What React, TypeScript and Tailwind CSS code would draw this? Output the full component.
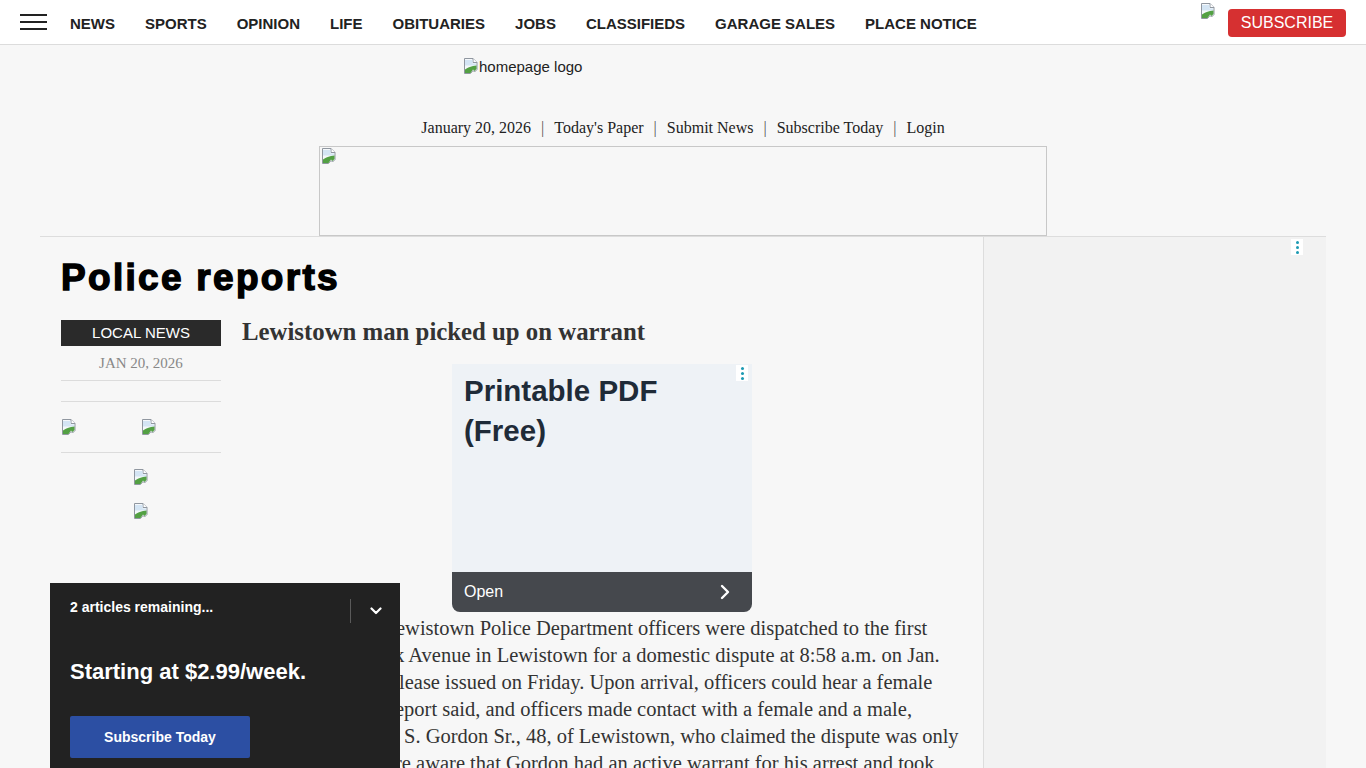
import React from "react";

const BrokenImg = () => (
  <svg width="16" height="16" viewBox="0 0 16 16" className="block">
    <path d="M1.5 0.5h8.5l4 4v7l-2.5 2.5-1.5-1.5-2.5 3h-6z" fill="#f5f8fb" stroke="#9097a0" strokeWidth="1" />
    <path d="M10 0.5v4h4" fill="#ffffff" stroke="#9097a0" strokeWidth="1" />
    <path d="M2 2h7.5v3.5h3.5v2h-11z" fill="#d4e5f4" />
    <path d="M2 15v-3.5c2-1.8 4.5-2.8 8-3.6l3.5-0.4v3.5l-2 2-1.5-1.5-2.5 3.5z" fill="#53a043" />
  </svg>
);

const Dots = () => (
  <div className="w-[12px] h-[16px] bg-white flex flex-col items-center justify-center gap-[2px]">
    <span className="w-[3px] h-[3px] rounded-full bg-[#1c9ab3]" />
    <span className="w-[3px] h-[3px] rounded-full bg-[#1c9ab3]" />
    <span className="w-[3px] h-[3px] rounded-full bg-[#1c9ab3]" />
  </div>
);

const navItems = ["NEWS", "SPORTS", "OPINION", "LIFE", "OBITUARIES", "JOBS", "CLASSIFIEDS", "GARAGE SALES", "PLACE NOTICE"];

const bodyLines: { pre: string; rest: string; w: string }[] = [
  { pre: "LEWISTOWN – L", rest: "ewistown Police Department officers were dispatched to the first", w: "w-[154px]" },
  { pre: "block of East Par", rest: "k Avenue in Lewistown for a domestic dispute at 8:58 a.m. on Jan.", w: "w-[152px]" },
  { pre: "16, according to a re", rest: "lease issued on Friday. Upon arrival, officers could hear a female", w: "w-[157px]" },
  { pre: "screaming, the r", rest: "eport said, and officers made contact with a female and a male,", w: "w-[153px]" },
  { pre: "identified as Jon ", rest: "S. Gordon Sr., 48, of Lewistown, who claimed the dispute was only", w: "w-[162px]" },
  { pre: "verbal. Officers we", rest: "re aware that Gordon had an active warrant for his arrest and took", w: "w-[153px]" },
  { pre: "him into custody", rest: " without incident. He was transported to the Mifflin County jail.", w: "w-[154px]" },
];

export default function App() {
  const sans = "font-['Liberation_Sans',Arial,sans-serif]";
  const serif = "font-['Liberation_Serif','Times_New_Roman',serif]";
  return (
    <div className={`min-h-screen bg-[#f7f7f7] ${sans}`}>
      {/* Top nav */}
      <header className="h-[45px] bg-white border-b border-[#dcdcdc] flex items-center pl-[20px] pr-[20px]">
        <div className="w-[27px] flex flex-col gap-[5px]">
          <span className="block h-[2px] bg-[#222]" />
          <span className="block h-[2px] bg-[#222]" />
          <span className="block h-[2px] bg-[#222]" />
        </div>
        <nav className="ml-[23px] mt-[4px] flex gap-[30px] text-[15px] font-bold text-[#222]">
          {navItems.map((n) => (
            <span key={n}>{n}</span>
          ))}
        </nav>
        <div className="ml-auto self-stretch flex items-center gap-[12px]">
          <div className="self-start mt-[3px]">
            <BrokenImg />
          </div>
          <button className="mt-[2px] h-[28px] w-[118px] rounded-[4px] bg-[#d63031] text-white text-[16px] leading-[28px]">
            SUBSCRIBE
          </button>
        </div>
      </header>

      {/* Logo */}
      <div className="h-[73px] pt-[13px]">
        <div className="w-[440px] mx-auto flex items-start text-[15px] text-[#222] leading-[17px]">
          <BrokenImg />
          <span>homepage logo</span>
        </div>
      </div>

      {/* Links row */}
      <div className={`h-[20px] flex justify-center items-center text-[16px] text-[#222] ${serif}`}>
        <span>January 20, 2026</span>
        <span className="mx-[10px] text-[#555]">|</span>
        <span>Today's Paper</span>
        <span className="mx-[10px] text-[#555]">|</span>
        <span>Submit News</span>
        <span className="mx-[10px] text-[#555]">|</span>
        <span>Subscribe Today</span>
        <span className="mx-[10px] text-[#555]">|</span>
        <span>Login</span>
      </div>

      {/* Ad */}
      <div className="mt-[8px] w-[728px] h-[90px] mx-auto border border-[#c8c8c8] p-[1px]">
        <BrokenImg />
      </div>

      {/* Main */}
      <main className="mx-[40px] flex border-t border-[#dddddd]">
        <section className="w-[943px] pl-[21px] pr-[21px] pt-[19px] pb-[40px]">
          <h1 className="text-[37px] leading-[44px] font-bold text-black tracking-[2.3px] [-webkit-text-stroke:1.4px_black]">
            Police reports
          </h1>
          <div className="mt-[20px] flex gap-[21px]">
            <div className="w-[160px] shrink-0">
              <div className="h-[26px] bg-[#2a2a2a] text-white text-[15px] leading-[26px] text-center">LOCAL NEWS</div>
              <div className={`h-[35px] flex items-center justify-center text-[15px] text-[#888] border-b border-[#dcdcdc] ${serif}`}>
                JAN 20, 2026
              </div>
              <div className="h-[21px] border-b border-[#dcdcdc]" />
              <div className="h-[51px] pt-[17px] flex gap-[64px] border-b border-[#dcdcdc]">
                <BrokenImg />
                <BrokenImg />
              </div>
              <div className="pt-[16px] flex flex-col items-center gap-[18px]">
                <BrokenImg />
                <BrokenImg />
              </div>
            </div>
            <div className="flex-1 min-w-0">
              <h2 className={`text-[24.8px] leading-[24px] font-bold text-[#333] ${serif}`}>
                Lewistown man picked up on warrant
              </h2>
              <div className="mt-[20px] w-[300px] h-[248px] mx-auto rounded-b-[8px] overflow-hidden flex flex-col">
                <div className="relative flex-1 bg-[#eef2f6] pl-[12px] pt-[7px]">
                  <div className="text-[29.5px] leading-[40px] font-bold text-[#1f2b38]">
                    Printable PDF
                    <br />
                    (Free)
                  </div>
                  <div className="absolute top-[1px] right-[4px]">
                    <Dots />
                  </div>
                </div>
                <div className="h-[40px] bg-[#45484d] flex items-center justify-between pl-[12px] pr-[22px]">
                  <span className="text-white text-[16px]">Open</span>
                  <svg width="10" height="16" viewBox="0 0 10 16">
                    <path d="M2 2l6 6-6 6" fill="none" stroke="white" strokeWidth="2.4" strokeLinecap="round" strokeLinejoin="round" />
                  </svg>
                </div>
              </div>
              <div className={`mt-[3px] text-[20.5px] leading-[27px] text-[#333] ${serif}`}>
                {bodyLines.map((l, i) => (
                  <div key={i} className="whitespace-pre">
                    <span className={`inline-block ${l.w} overflow-hidden text-right align-bottom whitespace-pre`}>{l.pre}</span>
                    {l.rest}
                  </div>
                ))}
              </div>
            </div>
          </div>
        </section>
        <aside className="relative flex-1 bg-[#f2f2f2] border-l border-[#dddddd] min-h-[560px]">
          <div className="absolute top-[2px] right-[23px]">
            <Dots />
          </div>
        </aside>
      </main>

      {/* Paywall popup */}
      <div className="fixed left-[50px] bottom-0 w-[350px] h-[185px] bg-[#222222] text-white">
        <div className="h-[48px] flex items-center pl-[20px]">
          <span className="flex-1 text-[14px] font-bold">2 articles remaining...</span>
          <span className="w-px h-[24px] bg-[#5a5a5a] mt-[8px]" />
          <span className="w-[49px] flex justify-center mt-[8px]">
            <svg width="12" height="8" viewBox="0 0 12 8">
              <path d="M1.5 1.5l4.5 4.5 4.5-4.5" fill="none" stroke="white" strokeWidth="2.2" strokeLinecap="round" strokeLinejoin="round" />
            </svg>
          </span>
        </div>
        <div className="mt-[27px] pl-[20px] text-[22px] leading-[28px] font-bold">Starting at $2.99/week.</div>
        <button className="mt-[30px] ml-[20px] w-[180px] h-[42px] bg-[#2c4fa3] rounded-[2px] text-[14px] font-bold text-white">
          Subscribe Today
        </button>
      </div>
    </div>
  );
}
